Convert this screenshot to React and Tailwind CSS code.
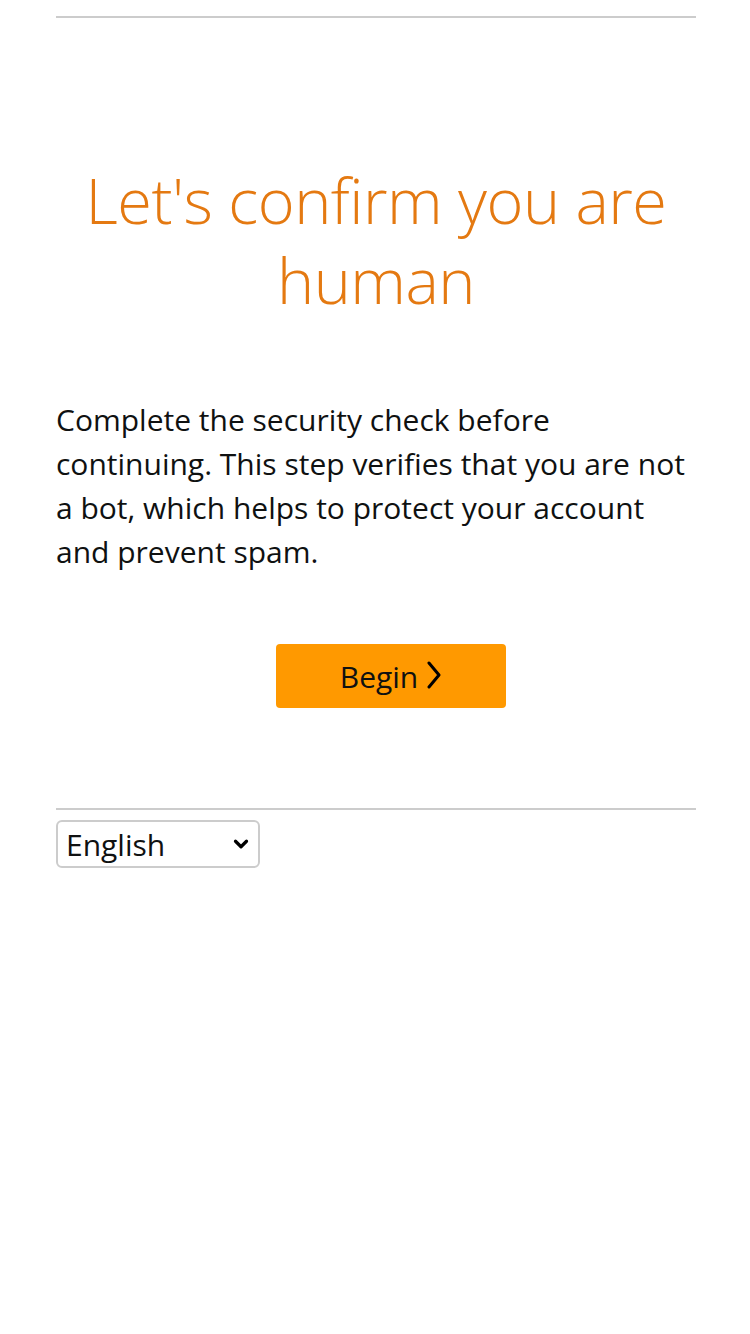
import React, { useState } from 'react'
import { ChevronDown } from 'lucide-react'

const font = { fontFamily: '"Open Sans", "Noto Sans", Arial, sans-serif' }

const App = () => {
  const [lang, setLang] = useState('en')

  return (
    <div className="min-h-[1334px] bg-white pl-[56px] pr-[54px] pt-[16px]" style={font}>
      <div className="border-t-2 border-[#cccccc]" />

      {/* Заголовок */}
      <h1 className="mt-[142px] text-center text-[63px] leading-[80px] font-light text-[#e47911] tracking-[-0.5px]">
        Let's confirm you are human
      </h1>

      {/* Описание */}
      <p className="mt-[78px] text-[30px] leading-[44px] text-[#0f1111] tracking-[0px]">
        Complete the security check before continuing. This step verifies that you are not a bot, which helps to protect your account and prevent spam.
      </p>

      <div className="mt-[70px] flex">
        <button className="ml-[220px] flex h-[64px] w-[230px] items-center justify-center gap-[8px] rounded-[4px] bg-[#ff9900] text-[30px] text-[#0f1111]">
          <span>Begin</span>
          <svg width="16" height="28" viewBox="0 0 16 28" fill="none" className="mt-[-2px]">
            <polyline points="3,2 13,14 3,26" stroke="#000" strokeWidth="3" strokeLinecap="round" strokeLinejoin="round" />
          </svg>
        </button>
      </div>

      <div className="mt-[100px] border-t-2 border-[#cccccc]" />

      <div className="relative mt-[10px] w-[204px]">
        <select
          value={lang}
          onChange={(e) => setLang(e.target.value)}
          className="h-[48px] w-full appearance-none rounded-[6px] border-2 border-[#cccccc] bg-white pl-[8px] text-[30px] text-[#0f1111]"
          style={font}
        >
          <option value="en">English</option>
          <option value="es">Español</option>
          <option value="de">Deutsch</option>
        </select>
        <ChevronDown
          size={22}
          strokeWidth={3.5}
          className="pointer-events-none absolute right-[8px] top-[13px] text-black"
        />
      </div>
    </div>
  )
}

export default App
